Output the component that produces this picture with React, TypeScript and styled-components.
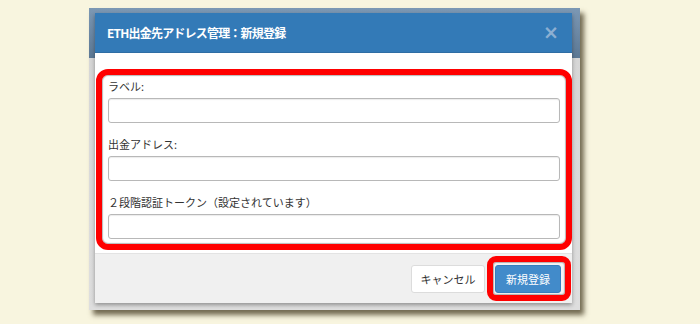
import React from 'react'
import styled, { createGlobalStyle } from 'styled-components'

const GlobalStyle = createGlobalStyle`
  html, body {
    margin: 0;
    padding: 0;
    background: #f8f5df;
  }
  body {
    font-family: 'Noto Sans CJK JP', 'Noto Sans', sans-serif;
  }
`

const Page = styled.div`
  width: 700px;
  height: 324px;
  box-sizing: border-box;
  padding: 8px 0 0 89px;
  background: #f8f5df;
`

const Shot = styled.div`
  width: 491px;
  height: 302px;
  box-sizing: border-box;
  padding: 5px 8px 0 6px;
  background: linear-gradient(
    to bottom,
    #7c98b4 0,
    #5c7894 50px,
    #d6d6d6 50px,
    #dedede 100%
  );
  box-shadow: 4px 5px 5px rgba(70, 60, 35, 0.75);
`

const Modal = styled.div`
  height: 290px;
  display: flex;
  flex-direction: column;
  background: #fff;
  box-shadow: 0 2px 4px rgba(0, 0, 0, 0.35);
`

const Header = styled.div`
  height: 40px;
  flex: none;
  display: flex;
  align-items: center;
  justify-content: space-between;
  padding: 0 13px 0 12px;
  background: #337ab7;
  border-bottom: 1px solid #2e6da4;
  box-sizing: border-box;
`

const Title = styled.h4`
  margin: 0;
  color: #fff;
  font-size: 12px;
  font-weight: 700;
  letter-spacing: -0.8px;
`

const Close = styled.span`
  color: #8cafd2;
  font-family: 'DejaVu Sans', sans-serif;
  font-size: 19px;
  font-weight: 700;
  line-height: 1;
`

const Body = styled.div`
  flex: 1;
  padding: 16px 0 3px 1px;
`

const Highlight = styled.div<{ $radius: number }>`
  border: 6px solid #ff0000;
  border-radius: ${p => p.$radius}px;
  background: #fff;
  box-shadow: inset 0 0 1px 1px rgba(0, 0, 0, 0.28);
`

const Form = styled.div`
  padding: 1px 6px 5px 6px;
`

const Label = styled.label`
  display: flex;
  align-items: center;
  height: 20px;
  margin-bottom: 2px;
  font-size: 11px;
  color: #333;
`

const Input = styled.input`
  display: block;
  width: 100%;
  height: 25px;
  box-sizing: border-box;
  margin: 0 0 11px 0;
  border: 1px solid #b8b8b8;
  border-radius: 3px;
  box-shadow: inset 0 1px 1px rgba(0, 0, 0, 0.08);
  background: #fff;
  &:last-child {
    margin-bottom: 0;
  }
`

const Footer = styled.div`
  height: 50px;
  flex: none;
  display: flex;
  align-items: center;
  justify-content: flex-end;
  gap: 2px;
  padding-right: 1px;
  background: #f0f0f0;
  border-top: 1px solid #e3e3e3;
  box-sizing: border-box;
`

const ButtonFrame = styled(Highlight)`
  padding: 3px 4px 2px 2px;
  background: #f4f4f4;
`

const Button = styled.button<{ $primary?: boolean }>`
  height: 28px;
  padding: 0;
  white-space: nowrap;
  border-radius: 3px;
  font-family: 'Noto Sans CJK JP', 'Noto Sans', sans-serif;
  font-size: 11px;
  border: 1px solid ${p => (p.$primary ? '#357ebd' : '#dcdcdc')};
  background: ${p => (p.$primary ? '#428bca' : '#fff')};
  color: ${p => (p.$primary ? '#fff' : '#333')};
`

const CancelButton = styled(Button)`
  width: 74px;
`

const SubmitButton = styled(Button)`
  width: 66px;
`

export default function App() {
  return (
    <Page>
      <GlobalStyle />
      <Shot>
        <Modal>
          <Header>
            <Title>ETH出金先アドレス管理：新規登録</Title>
            <Close>×</Close>
          </Header>
          <Body>
            <Highlight $radius={12}>
              <Form>
                <Label>ラベル:</Label>
                <Input />
                <Label>出金アドレス:</Label>
                <Input />
                <Label>２段階認証トークン（設定されています）</Label>
                <Input />
              </Form>
            </Highlight>
          </Body>
          <Footer>
            <CancelButton>キャンセル</CancelButton>
            <ButtonFrame $radius={9}>
              <SubmitButton $primary>新規登録</SubmitButton>
            </ButtonFrame>
          </Footer>
        </Modal>
      </Shot>
    </Page>
  )
}
